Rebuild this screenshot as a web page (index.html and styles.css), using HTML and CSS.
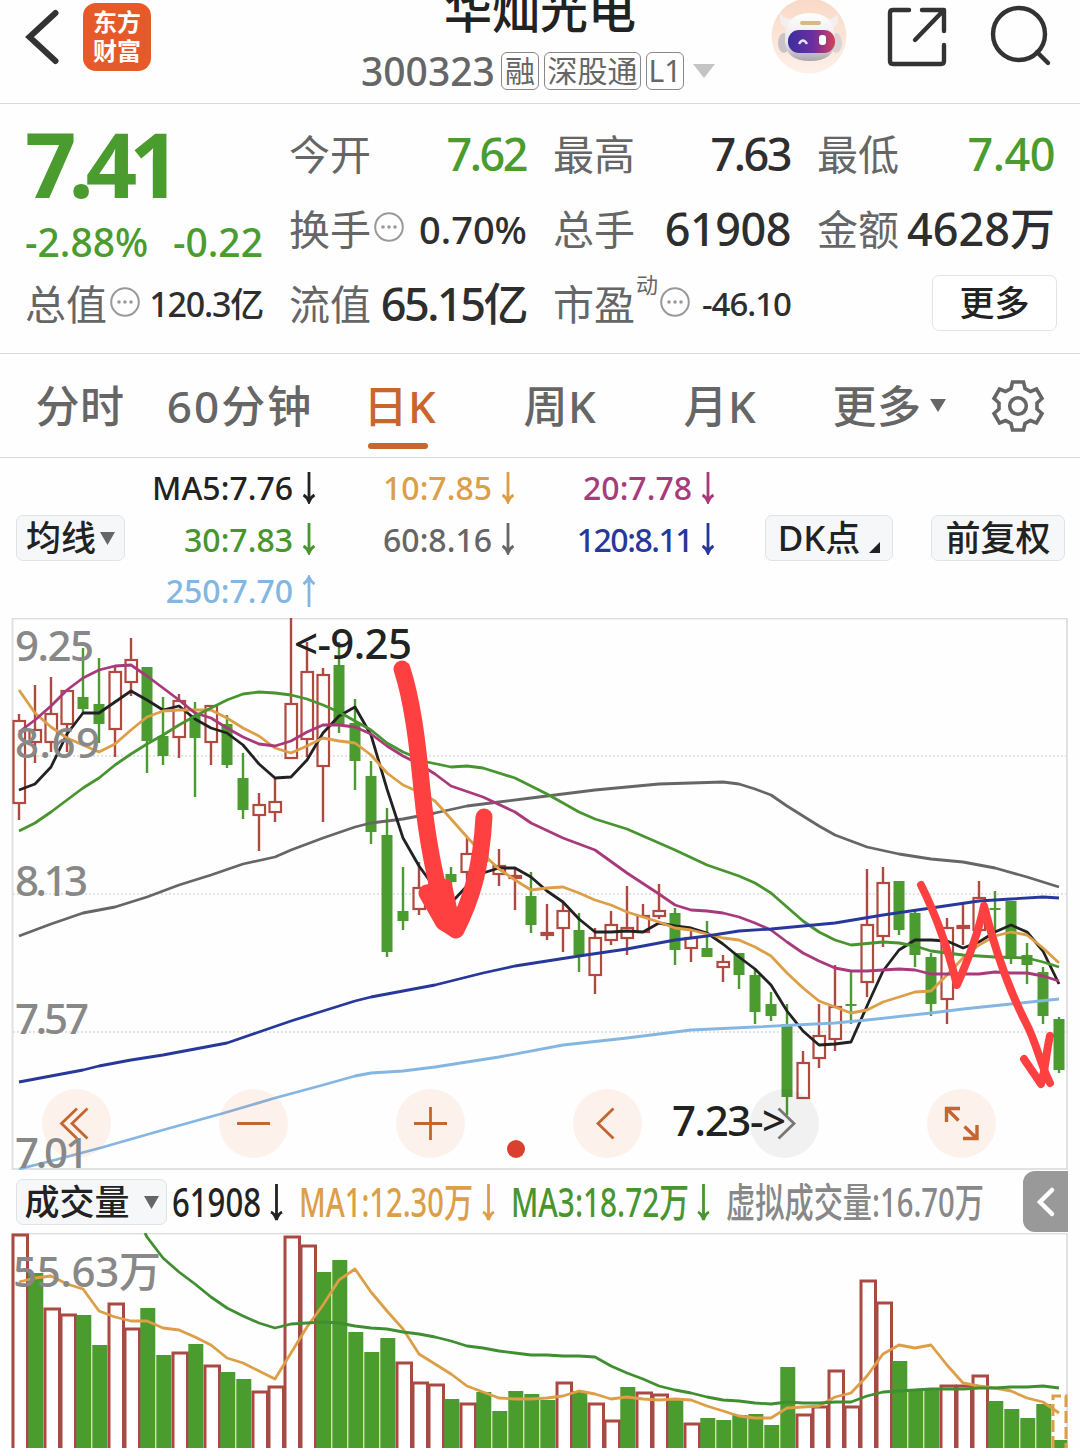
FILE: index.html
```html
<!DOCTYPE html>
<html lang="zh-CN">
<head>
<meta charset="utf-8">
<title>华灿光电 300323</title>
<link rel="stylesheet" href="styles.css">
</head>
<body>

<header class="topbar">
  <svg class="back" width="40" height="60" viewBox="0 0 40 60"><path d="M33 8L7 32L33 56"/></svg>
  <div class="logo"><span>东方</span><span>财富</span></div>
  <div class="stock">
    <h1>华灿光电</h1>
    <div class="code">
      <span class="num">300323</span>
      <i class="badge">融</i><i class="badge wide">深股通</i><i class="badge">L1</i>
      <svg width="22" height="14" viewBox="0 0 22 14"><path d="M0 0H22L11 14Z" fill="#c4c4c4"/></svg>
    </div>
  </div>
  <svg class="robot" width="76" height="76" viewBox="0 0 76 76">
    <defs>
      <linearGradient id="visor" x1="0" x2="1"><stop offset="0" stop-color="#3a2ea0"/><stop offset=".55" stop-color="#6d2f9e"/><stop offset="1" stop-color="#d8405a"/></linearGradient>
      <linearGradient id="face" x1="0" x2="0" y1="0" y2="1"><stop offset="0" stop-color="#f9d9c6"/><stop offset="1" stop-color="#fdf0e9"/></linearGradient>
      <linearGradient id="shell" x1="0" x2="0" y1="0" y2="1"><stop offset="0" stop-color="#fff"/><stop offset=".6" stop-color="#e9e6ea"/><stop offset="1" stop-color="#aaa5ad"/></linearGradient>
    </defs>
    <circle cx="38" cy="38" r="37.5" fill="url(#face)"/>
    <path d="M9 15Q7 29 19 31L26 20Q13 23 9 15ZM66 15Q70 27 59 31L52 20Q64 23 66 15Z" fill="#f4eeee"/>
    <ellipse cx="13" cy="45" rx="6" ry="10" fill="#c9c3c8"/><ellipse cx="65" cy="45" rx="6" ry="10" fill="#d9d4d6"/>
    <path d="M14 42Q14 15 39 15T64 42Q64 63 39 63T14 42Z" fill="url(#shell)"/>
    <rect x="29" y="23" width="21" height="4" rx="2" fill="#d9b78c"/>
    <rect x="17" y="32" width="47" height="23" rx="11" fill="url(#visor)"/>
    <path d="M28 46Q32 39 36 46" fill="none" stroke="#e6e0ff" stroke-width="2.4"/>
    <rect x="48" y="37" width="7" height="10" rx="3" fill="#fff"/>
  </svg>
  <svg class="share" width="60" height="60" viewBox="0 0 60 60"><path d="M22 3H6Q3 3 3 6V54Q3 57 6 57H54Q57 57 57 54V38M35 3H57V24M56 4L28 33"/></svg>
  <svg class="search" width="64" height="64" viewBox="0 0 64 64"><circle cx="29" cy="31" r="26"/><path d="M47 49L58 60"/></svg>
</header>

<section class="quote">
  <div class="price">
    <b>7.41</b>
    <div class="change"><span>-2.88%</span><span>-0.22</span></div>
  </div>
  <div class="cell"><label>今开</label><span class="val big green short">7.62</span></div>
  <div class="cell"><label>最高</label><span class="val big short">7.63</span></div>
  <div class="cell"><label>最低</label><span class="val big green snug">7.40</span></div>
  <div class="cell"><label>换手</label><svg class="dots" viewBox="0 0 30 30"><circle class="ring" cx="15" cy="15" r="13.8"/><circle cx="9" cy="15" r="1.8"/><circle cx="15" cy="15" r="1.8"/><circle cx="21" cy="15" r="1.8"/></svg><span class="val mid">0.70%</span></div>
  <div class="cell"><label>总手</label><span class="val big snug">61908</span></div>
  <div class="cell"><label>金额</label><span class="val big">4628万</span></div>
  <div class="cell"><label>总值</label><svg class="dots" viewBox="0 0 30 30"><circle class="ring" cx="15" cy="15" r="13.8"/><circle cx="9" cy="15" r="1.8"/><circle cx="15" cy="15" r="1.8"/><circle cx="21" cy="15" r="1.8"/></svg><span class="val small">120.3亿</span></div>
  <div class="cell"><label>流值</label><span class="val big short">65.15亿</span></div>
  <div class="cell"><label>市盈<sup>动</sup></label><svg class="dots pe" viewBox="0 0 30 30"><circle class="ring" cx="15" cy="15" r="13.8"/><circle cx="9" cy="15" r="1.8"/><circle cx="15" cy="15" r="1.8"/><circle cx="21" cy="15" r="1.8"/></svg><span class="val xsmall">-46.10</span></div>
  <div class="cell end"><button class="more">更多</button></div>
</section>

<nav class="tabs">
  <a>分时</a>
  <a>60分钟</a>
  <a class="active">日K</a>
  <a>周K</a>
  <a>月K</a>
  <a>更多<svg width="16" height="13" viewBox="0 0 16 13"><path d="M0 0H16L8 13Z" fill="#666"/></svg></a>
  <a><svg class="gear" width="54" height="54" viewBox="-27 -27 54 54"><path d="M-5.500 -24H5.500L7 -17.500L12.500 -14.500L18.500 -17L24 -7.500L19 -3V3L24 7.500L18.500 17L12.500 14.500L7 17.500L5.500 24H-5.500L-7 17.500L-12.500 14.500L-18.500 17L-24 7.500L-19 3V-3L-24 -7.500L-18.500 -17L-12.500 -14.500L-7 -17.500Z"/><circle r="8.3"/></svg></a>
</nav>

<section class="averages">
  <button class="chip">均线<svg width="15" height="13" viewBox="0 0 15 13"><path d="M0 0H15L7.5 13Z" fill="#666"/></svg></button>
  <div class="ma">
    <span class="ma5">MA5:7.76<svg viewBox="0 0 14 32"><path d="M7 0V29M1.5 23Q5 25 7 30Q9 25 12.5 23"/></svg></span>
    <span class="ma10">10:7.85<svg viewBox="0 0 14 32"><path d="M7 0V29M1.5 23Q5 25 7 30Q9 25 12.5 23"/></svg></span>
    <span class="ma20">20:7.78<svg viewBox="0 0 14 32"><path d="M7 0V29M1.5 23Q5 25 7 30Q9 25 12.5 23"/></svg></span>
    <span class="ma30">30:7.83<svg viewBox="0 0 14 32"><path d="M7 0V29M1.5 23Q5 25 7 30Q9 25 12.5 23"/></svg></span>
    <span class="ma60">60:8.16<svg viewBox="0 0 14 32"><path d="M7 0V29M1.5 23Q5 25 7 30Q9 25 12.5 23"/></svg></span>
    <span class="ma120">120:8.11<svg viewBox="0 0 14 32"><path d="M7 0V29M1.5 23Q5 25 7 30Q9 25 12.5 23"/></svg></span>
    <span class="ma250">250:7.70<svg viewBox="0 0 14 32"><path d="M7 32V3M1.5 9Q5 7 7 2Q9 7 12.5 9"/></svg></span>
  </div>
  <button class="chip dk">DK点<svg width="11" height="11" viewBox="0 0 11 11"><path d="M11 0V11H0Z" fill="#222"/></svg></button>
  <button class="chip fq">前复权</button>
</section>

<svg class="kline" width="1080" height="552" viewBox="0 618 1080 552">
  <rect class="frame" x="12.5" y="618.5" width="1054.5" height="550.5"/>
  <path class="grid" d="M13 756H1066M13 894H1066M13 1032H1066"/>
  <g id="candles"></g>
  <g id="lines"></g>
  <g class="tools">
    <circle cx="76.5" cy="1123.5" r="34.5"/><circle cx="253.5" cy="1123.5" r="34.5"/><circle cx="430.5" cy="1123.5" r="34.5"/>
    <circle cx="607.5" cy="1123.5" r="34.5"/><circle class="off" cx="784.5" cy="1123.5" r="34.5"/><circle cx="961.5" cy="1123.5" r="34.5"/>
    <path d="M77 1108.500L61.500 1123.500L77 1138.500M87.500 1108.500L72 1123.500L87.500 1138.500M237 1123.500H270M414 1123.500H447M430.500 1107V1140M613.500 1108.500L598 1123.500L613.500 1138.500"/>
    <path class="off" d="M778.500 1108.500L794 1123.500L778.500 1138.500"/>
    <path class="bold" d="M946.500 1122V1108.500H960M947 1109L958.500 1120.500M964.500 1126.500L977 1138.500M963 1138.500H977V1125"/>
  </g>
  <circle cx="516" cy="1149" r="9" fill="#d9402e"/>
  <g class="axis">
    <text x="15" y="661" textLength="79">9.25</text>
    <text x="15" y="758" textLength="85">8.69</text>
    <text x="15" y="896" textLength="73">8.13</text>
    <text x="15" y="1034" textLength="74">7.57</text>
    <text x="15" y="1168" textLength="74">7.01</text>
  </g>
  <g class="mark">
    <text x="294" y="659" textLength="118">&lt;-9.25</text>
    <text x="672" y="1136" textLength="114">7.23-&gt;</text>
  </g>
  <g class="pen">
    <path stroke-width="17" d="M402 669C412 700 417 738 422 790C427 840 436 885 447 921M427 893L443 921L456 930C471 900 481 870 484 817"/>
    <path fill="#ff4040" stroke-width="12" d="M427 891L442 924L456 932L446 885Z"/>
    <path stroke-width="8" d="M921 885C936 915 949 953 957 985C968 960 978 935 984 906C995 950 1010 992 1027 1025C1036 1042 1041 1066 1050 1083M1024 1059L1041 1084C1046 1067 1046 1052 1050 1036"/>
  </g>
</svg>

<div class="volbar">
  <button class="chip vol">成交量<svg width="15" height="13" viewBox="0 0 15 13"><path d="M0 0H15L7.5 13Z" fill="#666"/></svg></button>
  <svg class="volnums" width="840" height="62" viewBox="167 1170 840 62">
    <g fill="#222"><text x="172" y="1217" textLength="89" lengthAdjust="spacingAndGlyphs">61908</text><path class="arr" stroke="#222" d="M276.500 1184V1218M271 1212Q275 1214 276.500 1220Q278 1214 282 1212"/></g>
    <g fill="#dc9e46"><text x="299" y="1217" textLength="174" lengthAdjust="spacingAndGlyphs">MA1:12.30万</text><path class="arr" stroke="#dc9e46" d="M488.500 1184V1218M483 1212Q487 1214 488.500 1220Q490 1214 494 1212"/></g>
    <g fill="#489530"><text x="511" y="1217" textLength="178" lengthAdjust="spacingAndGlyphs">MA3:18.72万</text><path class="arr" stroke="#489530" d="M703.500 1184V1218M698 1212Q702 1214 703.500 1220Q705 1214 709 1212"/></g>
    <text fill="#888" x="726" y="1217" textLength="258" lengthAdjust="spacingAndGlyphs">虚拟成交量:16.70万</text>
  </svg>
  <div class="handle"><svg width="20" height="32" viewBox="0 0 20 32"><path d="M16 4L4 16L16 28"/></svg></div>
</div>

<svg class="volume" width="1080" height="215" viewBox="0 1233 1080 215">
  <rect class="frame" x="12.5" y="1233.500" width="1054.5" height="300"/>
  <g id="bars"></g>
  <path d="M1053 1448V1396H1066V1448" fill="none" stroke="#dc9e46" stroke-width="3" stroke-dasharray="12 4"/>
  <g id="vlines"></g>
  <g class="axis"><text x="13" y="1287" textLength="148">55.63万</text></g>
</svg>

<script src="chart.js"></script>
</body>
</html>
```
FILE: styles.css
```css
* {
  box-sizing: border-box;
}

body {
  margin: 0;
  width: 1080px;
  height: 1448px;
  overflow: hidden;
  background: #fefefe;
  color: #2e2e2e;
  font-family: "Noto Sans", "Noto Sans CJK SC", sans-serif;
  font-weight: 500;
}

svg {
  display: block;
  flex: none;
}

/* top bar */
.topbar {
  display: flex;
  height: 104px;
  border-bottom: 1px solid #d9dadb;
  overflow: hidden;
}

.back {
  margin: 5px 18px 0 20px;
  width: 45px;
}

.back path,
.share path,
.search path,
.search circle {
  fill: none;
  stroke: #333;
  stroke-width: 6;
  stroke-linecap: round;
}

.share path,
.search path,
.search circle {
  stroke-width: 4.4;
  stroke-linejoin: round;
}

.logo {
  width: 68px;
  height: 68px;
  margin-top: 3px;
  padding-top: 3px;
  border-radius: 13px;
  background: #e55a28;
  color: #fff;
  font: 700 24px/29px "Noto Sans CJK SC", sans-serif;
  text-align: center;
}

.logo span {
  display: block;
}

.stock {
  width: 360px;
  margin-left: 209px;
}

.stock h1 {
  margin: -25px 0 0 84px;
  font: 500 48px/64px "Noto Sans CJK SC", sans-serif;
  color: #222;
}

.code {
  display: flex;
  align-items: center;
  height: 40px;
  margin-top: 12px;
  color: #666;
}

.code .num {
  width: 140px;
  margin-left: 1px;
  font-size: 39px;
  line-height: 38px;
}

.badge {
  height: 38px;
  width: 38px;
  margin-right: 5px;
  border: 1.500px solid #888;
  border-radius: 6px;
  font: 400 30px/35px "Noto Sans", "Noto Sans CJK SC", sans-serif;
  text-align: center;
}

.badge.wide {
  width: 97px;
}

.code svg {
  margin-left: 4px;
}

.robot {
  margin: -2px 0 0 51px;
}

.share {
  margin: 7px 0 0 40px;
}

.search {
  margin: 3px 0 0 43px;
}

/* quote */
.quote {
  display: grid;
  grid-template-columns: repeat(4, 238px);
  grid-auto-rows: 75px;
  column-gap: 26px;
  height: 250px;
  padding: 12px 25px 0;
  border-bottom: 1px solid #d9dadb;
}

.price {
  grid-row: span 2;
  color: #4a9c2e;
}

.price b {
  display: block;
  height: 95px;
  font-size: 90px;
  line-height: 94px;
  letter-spacing: -8px;
}

.change {
  display: flex;
  justify-content: space-between;
  font-size: 39px;
  line-height: 61px;
}

.cell {
  display: flex;
  align-items: center;
  position: relative;
  white-space: nowrap;
}

.cell label {
  width: 84px;
  margin-top: -4px;
  font: 400 41px/60px "Noto Sans CJK SC", sans-serif;
  color: #666;
}

.cell label sup {
  position: absolute;
  left: 83px;
  top: 2px;
  font-size: 22px;
  line-height: 30px;
}

.dots {
  width: 30px;
  height: 30px;
  margin: -4px 0 0 1px;
  fill: #999;
}

.dots.pe {
  margin-left: 23px;
}

.dots .ring {
  fill: none;
  stroke: #999;
  stroke-width: 2;
}

.val {
  margin: 1px 0 0 auto;
  line-height: 60px;
}

.big {
  font-size: 45px;
}

.snug {
  letter-spacing: -.500px;
}

.short {
  letter-spacing: -2.500px;
  margin-right: 1px;
}

.mid {
  font-size: 38px;
}

.small {
  font-size: 34px;
  letter-spacing: -1.200px;
}

.xsmall {
  font-size: 33px;
  letter-spacing: -1px;
}

.green {
  color: #4a9c2e;
}

.end {
  justify-content: flex-end;
}

button {
  font: 500 35px/44px "Noto Sans", "Noto Sans CJK SC", sans-serif;
  color: #222;
  padding: 0;
}

.more {
  width: 125px;
  height: 56px;
  margin: -1px -2px 0 0;
  border: 1.500px solid #e2e3e5;
  border-radius: 7px;
  background: #fff;
}

/* period tabs */
.tabs {
  display: grid;
  grid-template-columns: repeat(5, 160px) 178px 80px;
  height: 104px;
  border-bottom: 1px solid #d5d9dc;
}

.tabs a {
  display: flex;
  align-items: center;
  justify-content: center;
  position: relative;
  padding-bottom: 3px;
  font-size: 44px;
  letter-spacing: .5px;
  color: #666;
}

.tabs a:nth-child(2) {
  letter-spacing: 2px;
}

.tabs a svg {
  margin: 0 0 -2px 8px;
}

.tabs .active {
  color: #c9662f;
}

.tabs .active::after {
  content: "";
  position: absolute;
  left: 48px;
  bottom: 8px;
  width: 60px;
  height: 6px;
  border-radius: 3px;
  background: #c9662f;
}

.tabs .gear {
  margin: 0 0 -3px;
  fill: none;
  stroke: #666;
  stroke-width: 3.600;
}

/* moving averages */
.averages {
  display: flex;
  height: 160px;
  padding-left: 16px;
}

.chip {
  display: flex;
  align-items: center;
  justify-content: center;
  width: 109px;
  height: 46px;
  margin-top: 57px;
  border: 1.500px solid #dfe2e6;
  border-radius: 7px;
  background: #f6f7f9;
  white-space: nowrap;
}

.chip svg {
  margin-left: 4px;
}

.ma {
  display: grid;
  grid-template-columns: 191px 199px 200px;
  grid-auto-rows: 51.500px;
  width: 640px;
  padding-top: 4px;
}

.ma span {
  display: flex;
  align-items: center;
  justify-content: flex-end;
  font-size: 32px;
}

.ma span svg {
  width: 14px;
  height: 32px;
  margin-left: 9px;
  fill: none;
  stroke: currentColor;
  stroke-width: 2.800;
}

.ma5 { color: #222; }
.ma10 { color: #dc9e46; }
.ma20 { color: #a83a7c; }
.ma30 { color: #489530; }
.ma60 { color: #666; }
.ma120 { color: #27389a; letter-spacing: -1.500px; }
.ma250 { color: #84b6e2; }

.dk {
  width: 128px;
}

.dk svg {
  margin: 18px 0 0 9px;
}

.fq {
  width: 134px;
  margin-left: 38px;
}

/* charts */
.frame {
  fill: none;
  stroke: #dedede;
  stroke-width: 1.800;
}

.grid {
  stroke: #dcdcdc;
  stroke-width: 1.500;
  stroke-dasharray: 2 2;
}

.up {
  fill: #fff;
  stroke: #b04a40;
  stroke-width: 2.200;
}

.up.solid {
  fill: #b04a40;
}

.up.bar {
  stroke: #a84a42;
  stroke-width: 3;
}

.down {
  fill: #4a9c2e;
}

.wick-up {
  stroke: #b04a40;
  stroke-width: 2.400;
}

.wick-down {
  stroke: #4a9c2e;
  stroke-width: 2.400;
}

.line {
  fill: none;
  stroke-width: 2.800;
  stroke-linejoin: round;
}

.tools circle {
  fill: #e8702a;
  fill-opacity: .09;
}

.tools circle.off {
  fill: #000;
  fill-opacity: .05;
}

.tools path {
  fill: none;
  stroke: #c4662f;
  stroke-width: 2.800;
}

.tools path.off {
  stroke: #777;
}

.tools path.bold {
  stroke-width: 3.400;
}

.axis {
  fill: #888;
  font-size: 42px;
}

.mark {
  fill: #222;
  font-size: 42px;
}

.pen {
  fill: none;
  stroke: #ff4040;
  stroke-linecap: round;
  stroke-linejoin: round;
}

/* volume header */
.volbar {
  display: flex;
  height: 63px;
}

.vol {
  width: 151px;
  margin: 9px 0 0 16px;
}

.vol svg {
  margin-left: 14px;
}

.volnums {
  font-size: 40px;
}

.arr {
  fill: none;
  stroke-width: 2.800;
}

.handle {
  display: flex;
  align-items: center;
  justify-content: center;
  width: 45px;
  height: 61px;
  margin: 1px 0 0 16px;
  border-radius: 12px 0 0 12px;
  background: #999;
}

.handle path {
  fill: none;
  stroke: #fff;
  stroke-width: 4.500;
  stroke-linecap: round;
}
```
FILE: chart.js
```javascript
// [high, body top, body bottom, low, rising]
var candles = [
  [714,721,803,820,1],[685,730,742,763,1],[677,714,742,752,1],[691,691,724,752,1],[648,697,709,714,0],
  [658,704,724,743,0],[665,672,729,757,1],[638,660,682,696,1],[667,667,741,773,0],[697,736,756,765,0],
  [694,701,737,758,1],[702,715,738,797,0],[706,706,742,765,1],[715,724,765,768,0],[753,778,810,819,0],
  [793,805,815,851,1],[778,802,812,822,1],[618,704,758,758,1],[642,672,739,757,1],[668,675,766,822,1],
  [642,665,724,733,0],[699,723,761,790,0],[761,776,832,844,0],[808,835,952,957,0],[867,911,921,930,0],
  [862,888,909,915,1],[873,880,908,915,1],[867,874,882,912,0],[838,854,872,883,1],[830,843,862,880,0],
  [849,866,874,886,1],[867,876,878,910,1],[872,896,925,933,0],[904,933,935,940,1],[903,911,928,952,1],
  [913,930,955,972,0],[928,938,975,994,1],[911,925,940,945,1],[886,928,938,955,1],[904,916,932,932,1],
  [884,911,916,919,1],[908,913,950,965,0],[930,938,948,962,1],[921,948,957,957,0],[955,962,967,982,1],
  [953,953,975,989,0],[968,975,1012,1024,0],[992,1004,1016,1021,0],[1004,1024,1097,1115,0],[1051,1063,1098,1098,1],
  [1004,1036,1058,1068,1],[965,1007,1039,1051,1],[970,1004,1006,1024,0],[869,925,982,997,1],[867,883,936,947,1],
  [881,881,930,935,0],[910,913,955,967,0],[953,957,1004,1016,0],[918,928,999,1024,1],[903,926,928,945,1],
  [881,898,930,930,1],[891,908,910,933,0],[901,901,959,964,0],[943,955,965,984,0],[967,972,1016,1024,0],
  [1017,1019,1070,1073,0]
];

var averages = {
  '#666': '19,936 51,924 83,913 115,907 147,897 179,885 211,875 243,864 275,857 291,850 323,838 355,827 371,823 403,819 435,813 467,806 499,802 531,798 563,794 595,790 627,787 659,784 691,783 723,782 739,784 755,789 771,795 787,806 803,816 819,826 835,835 851,841 867,847 899,854 931,859 963,862 995,868 1027,877 1059,887',
  '#222': '19,790 35,784 51,767 67,734 83,713 99,713 115,702 131,691 147,700 163,710 179,706 195,719 211,728 227,733 243,745 259,764 275,778 291,777 307,760 323,733 339,716 355,707 371,735 387,789 403,838 419,866 435,888 451,903 467,886 483,873 499,868 515,868 531,877 547,891 563,902 579,919 595,932 611,932 627,931 643,932 659,923 675,926 691,928 707,933 723,944 739,957 755,969 771,985 787,1011 803,1031 819,1045 835,1044 851,1042 867,1006 883,971 899,950 915,940 931,940 947,941 963,948 979,942 995,932 1011,925 1027,932 1043,951 1059,984',
  '#dc9e46': '19,690 35,713 51,727 67,738 83,745 99,752 115,744 131,730 147,717 163,711 179,710 195,710 211,710 227,718 243,728 259,736 275,748 291,753 307,746 323,738 339,741 355,743 371,755 387,773 403,785 419,792 435,801 451,819 467,837 483,854 499,869 515,880 531,890 547,888 563,887 579,893 595,900 611,905 627,912 643,917 659,922 675,928 691,930 707,934 723,938 739,940 755,947 771,956 787,973 803,988 819,1001 835,1007 851,1013 867,1010 883,1002 899,997 915,992 931,991 947,975 963,958 979,945 995,936 1011,932 1027,935 1043,948 1059,963',
  '#a83a7c': '19,732 35,720 51,706 67,690 83,678 99,670 115,666 131,665 147,676 163,688 179,700 195,713 211,718 227,728 243,737 259,744 275,746 291,741 307,732 323,725 339,725 355,727 371,734 387,746 403,756 419,764 435,774 451,786 483,797 515,812 531,823 563,838 595,850 627,873 659,894 675,905 691,910 707,911 723,913 739,917 755,923 771,930 787,942 803,953 819,961 835,968 851,971 867,971 899,969 915,970 931,974 947,974 979,974 995,972 1011,973 1027,973 1043,976 1059,981',
  '#489530': '19,831 35,823 51,812 67,800 83,788 99,778 115,765 131,754 147,744 163,735 179,725 195,716 211,708 227,700 243,694 259,692 275,693 291,695 307,699 323,705 339,712 355,721 371,730 387,743 403,752 427,762 451,767 467,766 483,768 515,778 547,794 579,812 595,819 627,829 643,836 675,850 707,865 739,876 755,883 771,893 787,907 803,921 819,932 835,940 851,945 883,942 899,943 915,946 931,951 963,955 995,957 1027,958 1043,962 1059,967',
  '#27389a': '19,1082 51,1076 83,1070 99,1066 131,1060 163,1055 195,1049 227,1043 259,1032 291,1021 323,1011 355,1001 371,997 403,991 435,985 467,977 483,973 515,966 547,961 579,956 627,949 675,940 707,936 739,931 771,929 803,926 835,923 883,915 931,908 979,901 1011,899 1043,897 1059,898',
  '#84b6e2': '19,1169 51,1161 100,1148 163,1130 224,1113 275,1098 323,1085 355,1076 371,1073 403,1071 435,1067 499,1057 563,1045 627,1038 691,1030 755,1027 835,1023 867,1020 931,1013 963,1009 1011,1004 1059,999'
};

// bar tops, positive = rising (hollow), negative = falling (filled)
var volumes = [
  1234,-1273,1308,1314,-1315,-1345,1303,1328,-1308,-1355,1352,-1344,1365,-1372,-1379,1391,1386,1236,1245,
  -1272,-1260,-1332,-1352,-1338,1362,1382,1384,-1399,1403,-1392,-1411,-1391,-1394,-1400,1382,-1391,1403,
  1420,-1387,1392,1394,-1400,1423,-1418,-1420,-1415,-1414,-1425,-1367,1414,1406,1370,1406,1280,1302,
  -1361,-1391,-1390,1385,1385,1375,-1401,-1409,-1418,-1404,-1440
];

var vol5 = [
  1282,1278,1276,1284,1289,1311,1317,1321,1321,1328,1330,1337,1345,1358,1363,1371,1379,1353,1327,1305,1280,
  1269,1292,1311,1329,1354,1364,1374,1386,1392,1398,1399,1399,1398,1396,1391,1394,1399,1397,1399,1400,1399,
  1400,1406,1411,1416,1418,1418,1408,1407,1406,1397,1393,1376,1354,1345,1348,1345,1365,1383,1386,1388,1391,
  1398,1402,1413
];

// starts at the ninth bar
var vol10 = [
  1237,1258,1272,1284,1297,1308,1316,1323,1328,1324,1323,1322,1323,1326,1328,1329,1332,1334,1337,1341,1346,
  1348,1351,1353,1355,1355,1356,1356,1357,1366,1373,1379,1386,1390,1393,1397,1400,1401,1403,1404,1402,1403,
  1403,1402,1402,1396,1392,1391,1390,1389,1389,1389,1388,1388,1387,1387,1386,1388
];

function x(i) { return 19 + 16 * i; }

function line(points, color) {
  return '<polyline class="line" stroke="' + color + '" points="' + points + '"/>';
}

function rect(cls, left, top, w, h) {
  return '<rect class="' + cls + '" x="' + left + '" y="' + top + '" width="' + w + '" height="' + h + '"/>';
}

document.getElementById('candles').innerHTML = candles.map(function (c, i) {
  var cls = c[4] ? 'up' : 'down';
  var h = c[2] - c[1];
  var wick = '<path class="wick-' + cls + '" d="M' + x(i) + ' ' + c[0] + 'V' + c[3] + '"/>';
  if (c[4]) return wick + rect(h < 4 ? 'up solid' : 'up', x(i) - 5.5, c[1], 11.5, h);
  return wick + rect(cls, x(i) - 5.5, c[1], 11, h);
}).join('');

document.getElementById('lines').innerHTML = Object.keys(averages).map(function (color) {
  return line(averages[color], color);
}).join('');

document.getElementById('bars').innerHTML = volumes.map(function (v, i) {
  var left = 12 + 16 * i;
  if (v > 0) return rect('up bar', left + 1, v + 1, 14.5, 300);
  return rect('down', left + .3, -v, 15, 300);
}).join('');

document.getElementById('vlines').innerHTML =
  line(vol5.map(function (v, i) { return x(i) + ',' + v; }).join(' '), '#dc9e46') +
  line('145,1233 ' + vol10.map(function (v, i) { return x(i + 8) + ',' + v; }).join(' '), '#3f8f30');
```
